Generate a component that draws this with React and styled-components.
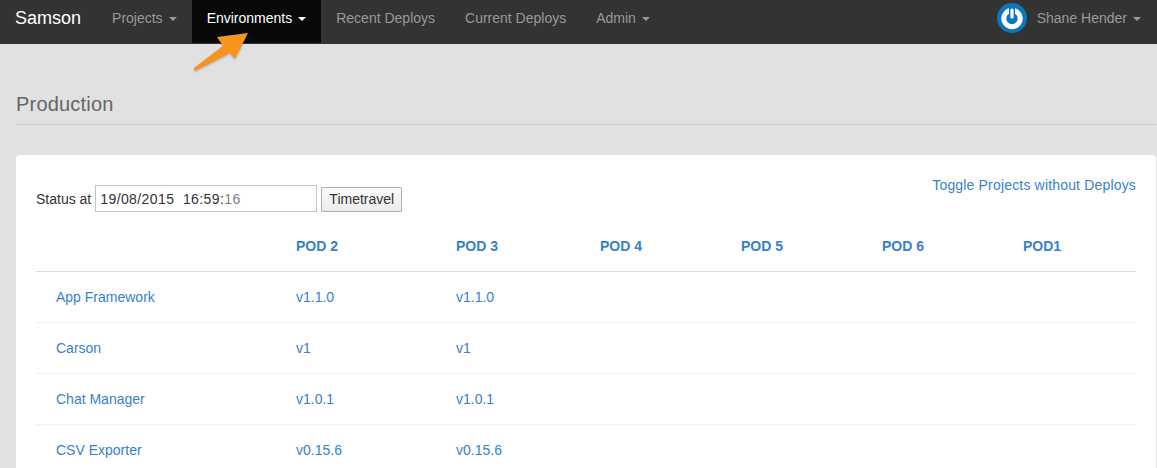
import React from 'react';
import styled, { createGlobalStyle } from 'styled-components';

const GlobalStyle = createGlobalStyle`
    html, body {
        margin: 0;
        height: 468px;
        overflow: hidden;
        background-color: #e1e1e1;
        font-family: "Liberation Sans", Arial, sans-serif;
        font-size: 14px;
        color: #333;
    }
`;

const Page = styled.div`
    position: relative;
    height: 468px;
    overflow: hidden;
`;

const Navbar = styled.nav`
    display: flex;
    align-items: stretch;
    height: 44px;
    background-color: #333;
`;

const Brand = styled.a`
    display: flex;
    align-items: center;
    padding: 0 16px 8px 15px;
    font-size: 18px;
    color: #fff;
`;

const NavItem = styled.a`
    display: flex;
    align-items: center;
    box-sizing: border-box;
    height: ${(p) => (p.$active ? '43px' : '44px')};
    padding: 0 15px ${(p) => (p.$active ? '7px' : '8px')};
    color: ${(p) => (p.$active ? '#fff' : '#999')};
    background-color: ${(p) => (p.$active ? '#080808' : 'transparent')};
`;

const Caret = styled.span`
    width: 0;
    height: 0;
    margin-left: 6px;
    margin-top: 2px;
    border-top: 4px solid currentColor;
    border-left: 4px solid transparent;
    border-right: 4px solid transparent;
`;

const UserMenu = styled.a`
    display: flex;
    align-items: center;
    margin-left: auto;
    padding: 0 16px 8px 0;
    color: #999;
`;

const Avatar = styled.svg`
    width: 30px;
    height: 30px;
    margin-right: 10px;
`;

const Arrow = styled.svg`
    position: absolute;
    left: 185px;
    top: 22px;
    width: 75px;
    height: 55px;
`;

const Content = styled.main`
    padding: 0 1px 0 16px;
`;

const Heading = styled.h1`
    margin: 0;
    padding: 49px 0 8px;
    font-size: 20px;
    line-height: 23px;
    letter-spacing: 0.2px;
    font-weight: 400;
    color: #666;
    border-bottom: 1px solid #ccc;
`;

const Panel = styled.section`
    margin-top: 30px;
    padding: 20px 20px 0;
    background-color: #fff;
    border-radius: 4px 4px 0 0;
    height: 400px;
    box-sizing: border-box;
`;

const TopRow = styled.div`
    display: flex;
    justify-content: space-between;
    align-items: flex-start;
`;

const StatusForm = styled.form`
    display: flex;
    align-items: center;
    margin: 10px 0 0;
`;

const DateInput = styled.div`
    box-sizing: border-box;
    display: flex;
    align-items: center;
    width: 222px;
    height: 27px;
    margin: 0 4px 0 4px;
    padding-left: 4px;
    border: 1px solid #c4c4c4;
    letter-spacing: 0.4px;
    white-space: pre;
    color: #333;
`;

const Seconds = styled.span`
    color: #808080;
`;

const TravelButton = styled.button`
    box-sizing: border-box;
    width: 81px;
    height: 25px;
    padding: 0;
    margin-top: 1px;
    border: 1px solid #b0b0b0;
    border-radius: 1px;
    background: linear-gradient(#fafafa, #ebebeb);
    font-family: inherit;
    font-size: 14px;
    color: #333;
`;

const ToggleLink = styled.a`
    line-height: 20px;
    letter-spacing: 0.17px;
    color: #3880cc;
`;

const Row = styled.div`
    display: grid;
    grid-template-columns: 240px 160px 144px 141px 141px 141px 133px;
    align-items: center;
    height: 50px;
    border-bottom: 1px solid #f0f0f0;
`;

const HeadRow = styled(Row)`
    height: 47px;
    margin-top: 10px;
    padding-bottom: 2px;
    border-bottom-color: #ddd;
`;

const HeadCell = styled.a`
    padding-left: 20px;
    font-weight: 700;
    color: #3880cc;
`;

const Cell = styled.a`
    padding-left: 20px;
    color: #3880cc;
`;

const pods = ['POD 2', 'POD 3', 'POD 4', 'POD 5', 'POD 6', 'POD1'];

const projects = [
    { name: 'App Framework', version: 'v1.1.0' },
    { name: 'Carson', version: 'v1' },
    { name: 'Chat Manager', version: 'v1.0.1' },
    { name: 'CSV Exporter', version: 'v0.15.6' },
];

export default function App() {
    return (
        <Page>
            <GlobalStyle />
            <Navbar>
                <Brand>Samson</Brand>
                <NavItem>Projects<Caret /></NavItem>
                <NavItem $active>Environments<Caret /></NavItem>
                <NavItem>Recent Deploys</NavItem>
                <NavItem>Current Deploys</NavItem>
                <NavItem>Admin<Caret /></NavItem>
                <UserMenu>
                    <Avatar viewBox="0 0 30 30">
                        <circle cx="15" cy="15" r="15" fill="#0a78bd" />
                        <circle cx="15" cy="15.5" r="8.2" fill="none" stroke="#fff" strokeWidth="5" />
                        <rect x="12" y="3" width="6" height="9" fill="#0a78bd" />
                        <rect x="13.4" y="5.5" width="3.2" height="10" rx="1.5" fill="#fff" />
                    </Avatar>
                    Shane Hender<Caret />
                </UserMenu>
            </Navbar>
            <Arrow viewBox="0 0 75 55">
                <path
                    d="M63 11 L32 15 L38 24 L9 46 L10 49 L45 31 L50 37 Z"
                    fill="#f7941d"
                    style={{ filter: 'drop-shadow(0 1px 1px rgba(0,0,0,0.25))' }}
                />
            </Arrow>
            <Content>
                <Heading>Production</Heading>
                <Panel>
                    <TopRow>
                        <StatusForm>
                            Status at
                            <DateInput>19/08/2015  16:59:<Seconds>16</Seconds></DateInput>
                            <TravelButton type="button">Timetravel</TravelButton>
                        </StatusForm>
                        <ToggleLink>Toggle Projects without Deploys</ToggleLink>
                    </TopRow>
                    <HeadRow>
                        <span />
                        {pods.map((pod) => <HeadCell key={pod}>{pod}</HeadCell>)}
                    </HeadRow>
                    {projects.map((project) => (
                        <Row key={project.name}>
                            <Cell>{project.name}</Cell>
                            <Cell>{project.version}</Cell>
                            <Cell>{project.version}</Cell>
                        </Row>
                    ))}
                </Panel>
            </Content>
        </Page>
    );
}
